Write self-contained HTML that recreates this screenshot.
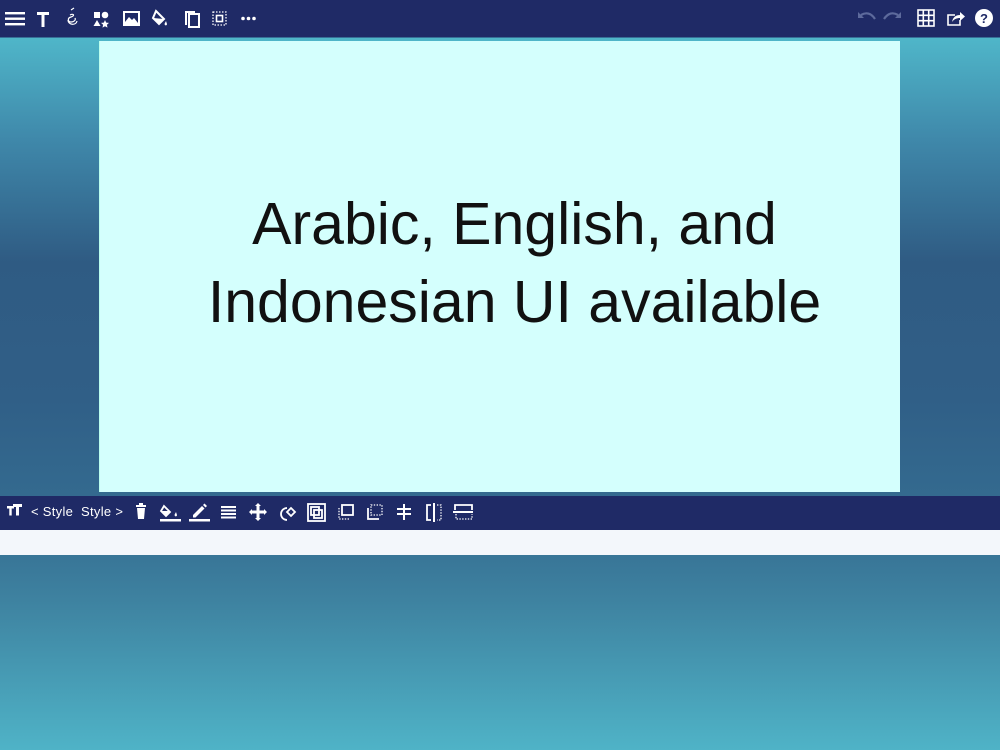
<!DOCTYPE html>
<html><head><meta charset="utf-8"><style>
*{margin:0;padding:0;box-sizing:border-box}
body{width:1000px;height:750px;overflow:hidden;position:relative;font-family:"Liberation Sans",sans-serif;
background:linear-gradient(180deg,#1f2a66 0,#1f2a66 37px,#4fb6c9 38px,#3f88aa 140px,#2f5b83 262px,#305f87 400px,#356e92 530px,#3e82a0 600px,#4fb3c7 750px)}
.top{position:absolute;left:0;top:0;width:1000px;height:37px;background:#1f2a66}
.canvas{position:absolute;left:99px;top:41px;width:801px;height:451px;background:#d4fffd;border-left:1px solid #bfe;}
.txt{position:absolute;left:28px;width:773px;text-align:center;font-size:59px;color:#111;line-height:78px;top:144px}
.bar{position:absolute;left:0;top:496px;width:1000px;height:34px;background:#1f2a66}
.band{position:absolute;left:0;top:530px;width:1000px;height:25px;background:#f3f7fb}
svg{position:absolute}
.st{position:absolute;top:504px;color:#fff;font-size:13px;letter-spacing:0.3px}
</style></head><body>
<div class="top"></div>
<svg width="1000" height="37" style="left:0;top:0" fill="#fff" stroke="none">
<rect x="5" y="12" width="20" height="2.4"/><rect x="5" y="17.5" width="20" height="2.4"/><rect x="5" y="23" width="20" height="2.4"/>
<path d="M37 12h12v3h-4.5v12h-3v-12h-4.5z"/>
<path d="M71 10l3-2M70 15c4-2 5 1 1 2c-4 1-3 5 0 5c3 0 5-2 4-4M68 20c0 5 8 6 9 1" fill="none" stroke="#fff" stroke-width="1.2"/>
<rect x="94" y="12" width="6" height="6"/><circle cx="105" cy="15" r="3.3"/><path d="M97 20l3.5 6h-7z"/><path d="M105 20l1.2 2.6 2.8.3-2.1 1.9.6 2.8-2.5-1.4-2.5 1.4.6-2.8-2.1-1.9 2.8-.3z"/>
<path d="M123 11h17v15h-17z M125 13v9l4-5 3 3 2-2 4 5v-10z" fill-rule="evenodd"/><circle cx="135" cy="15.5" r="1.4" fill="#1f2a66"/>
<path d="M156 11l8 8-5 5-6-6z" fill="none" stroke="#fff" stroke-width="2"/><path d="M153 18l6 6 5-5z"/><path d="M166 21c-1 2-2 3-1 4s2 0 2-1z"/>
<path d="M185 11h10v2h-8v12h-2z"/><rect x="189" y="14" width="10" height="13" fill="none" stroke="#fff" stroke-width="2"/>
<rect x="213" y="12" width="13" height="13" fill="none" stroke="#fff" stroke-width="1.3" stroke-dasharray="1.5 1.5"/><rect x="216.5" y="15.5" width="6" height="6" fill="none" stroke="#fff" stroke-width="1.6"/>
<circle cx="243" cy="18.5" r="1.8"/><circle cx="248.5" cy="18.5" r="1.8"/><circle cx="254" cy="18.5" r="1.8"/>
<g fill="none" stroke="#5d6a9c" stroke-width="2.2"><path d="M861 15c5-3 10-2 14 4"/><path d="M898 15c-5-3-10-2-14 4"/></g>
<path d="M858 12v6h6z" fill="#5d6a9c"/><path d="M901 12v6h-6z" fill="#5d6a9c"/>
<g fill="none" stroke="#fff" stroke-width="1.6"><rect x="918" y="10" width="16" height="16"/><path d="M923.3 10v16M928.7 10v16M918 15.3h16M918 20.7h16"/>
<path d="M955 15h-7v10h12v-5"/></g><path d="M952 22c1-5 4-7 8-7v-3l5 4.5-5 4.5v-3c-3 0-6 1-8 4z"/>
<circle cx="984" cy="18" r="9"/><text x="984" y="23" font-size="13" font-weight="bold" fill="#1f2a66" text-anchor="middle" font-family="Liberation Sans">?</text>
</svg>
<div class="canvas"><div class="txt">Arabic, English, and<br>Indonesian UI available</div></div>
<div class="bar"></div>
<div class="band"></div>
<svg width="480" height="34" style="left:0;top:496px" fill="#fff">
<path d="M7 10h7v2.5h-2.3v7h-2.4v-7h-2.3z M13 8h9v3h-3v8.5h-3v-8.5h-3z"/>
<path d="M136 9h10v2h-10z M139 7h4v2h-4z M137 12h8l-1 11h-6z"/>
<path d="M164 10l6 6-4 4-5-5z" fill="none" stroke="#fff" stroke-width="1.8"/><path d="M162 15l4 4 4-4z"/><path d="M176 16c-1 2-2 3-1 4s2 0 2-1z"/><rect x="160" y="23" width="21" height="2.5"/>
<path d="M193 19l9-9 2.5 2.5-9 9h-2.5z"/><path d="M203 9l1.5-1.5 2.5 2.5-1.5 1.5z"/><rect x="189" y="23" width="21" height="2.5"/>
<rect x="221" y="10" width="15" height="2"/><rect x="221" y="13.5" width="15" height="2"/><rect x="221" y="17" width="15" height="2"/><rect x="221" y="20.5" width="15" height="2"/>
<path d="M258 7l3 3h-6z M258 25l3-3h-6z M249 16l3-3v6z M267 16l-3-3v6z"/><rect x="256.5" y="9" width="3" height="14"/><rect x="251" y="14.5" width="14" height="3"/>
<path d="M287 12a6 6 0 1 0 0 12" fill="none" stroke="#fff" stroke-width="1.8"/><path d="M291 12l4 4-4 4-4-4z" fill="none" stroke="#fff" stroke-width="1.8"/>
<rect x="308" y="8" width="17" height="17" fill="none" stroke="#fff" stroke-width="1.8"/><rect x="311" y="11" width="8" height="8" fill="none" stroke="#fff" stroke-width="1.8"/><rect x="314" y="14" width="8" height="8" fill="none" stroke="#fff" stroke-width="1.8"/>
<rect x="342" y="9" width="11" height="10" fill="none" stroke="#fff" stroke-width="1.8"/><path d="M339 12v11h11" fill="none" stroke="#fff" stroke-width="1.3" stroke-dasharray="1.4 1.4"/>
<rect x="371" y="9" width="11" height="10" fill="none" stroke="#fff" stroke-width="1.3" stroke-dasharray="1.4 1.4"/><path d="M368 12v11h11" fill="none" stroke="#fff" stroke-width="1.8"/>
<rect x="397" y="12" width="14" height="2"/><rect x="397" y="17" width="14" height="2"/><rect x="403" y="8" width="2" height="16"/>
<path d="M431 9h-4v15h4" fill="none" stroke="#fff" stroke-width="1.8"/><rect x="433" y="7" width="2" height="19"/><path d="M437 9h4v15h-4" fill="none" stroke="#fff" stroke-width="1.3" stroke-dasharray="1.4 1.4"/>
<path d="M455 14v-5h17v5" fill="none" stroke="#fff" stroke-width="1.8"/><rect x="453" y="15" width="20" height="2"/><path d="M456 18v5h16v-5" fill="none" stroke="#fff" stroke-width="1.3" stroke-dasharray="1.4 1.4"/>
</svg>
<div class="st" style="left:31px">&lt; Style&nbsp; Style &gt;</div>
</body></html>
